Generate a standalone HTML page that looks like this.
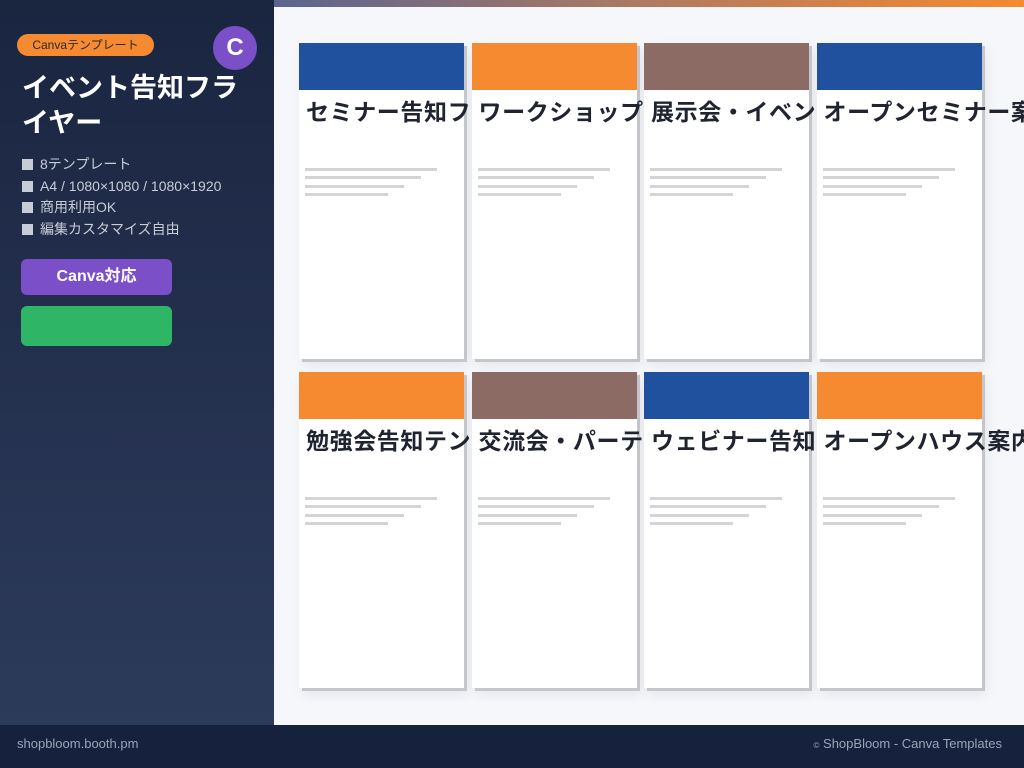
<!DOCTYPE html>
<html><head><meta charset="utf-8"><style>
*{margin:0;padding:0;box-sizing:border-box}
body{width:1024px;height:768px;overflow:hidden;font-family:"Liberation Sans","Noto Sans CJK JP",sans-serif;background:#f5f7fb;position:relative}
.side{position:absolute;left:0;top:0;width:274px;height:725px;background:linear-gradient(180deg,#1a2540,#2d3b5b)}
.top{position:absolute;left:274px;top:0;width:750px;height:7px;background:linear-gradient(90deg,#5a6490,#b07a60 50%,#f58a30)}
.main{position:absolute;left:274px;top:7px;width:750px;height:718px;background:#f5f7fb}
.foot{position:absolute;left:0;top:725px;width:1024px;height:43px;background:#16223d;color:#9aa3b8;font-size:13px}
.badge{position:absolute;left:17px;top:34px;width:137px;height:22px;border-radius:11px;background:#f58a30;color:#2a2a2a;font-size:12px;text-align:center;line-height:22px}
.av{position:absolute;left:213px;top:26px;width:44px;height:44px;border-radius:50%;background:#7a4fc8;color:#fff;font-size:24px;font-weight:bold;text-align:center;line-height:44px}
h1{position:absolute;left:22px;top:71px;color:#fff;font-size:27px;line-height:35px;font-weight:bold;width:230px}
ul{position:absolute;left:22px;top:154px;list-style:none;color:#c8ccd6;font-size:14px;line-height:21.5px}
ul li:before{content:"";display:inline-block;width:11px;height:11px;background:#c8ccd6;margin-right:7px;vertical-align:-1px}
.b1{position:absolute;left:21px;top:259px;width:151px;height:36px;border-radius:6px;background:#7a4fc8;color:#fff;font-size:16px;font-weight:bold;text-align:center;line-height:36px}
.b2{position:absolute;left:21px;top:306px;width:151px;height:40px;border-radius:6px;background:#2fb566}
.card{position:absolute;width:165px;height:316px;background:#fff;box-shadow:3px 3px 0 #c4c6cc,4px 6px 12px rgba(0,0,0,.08)}
.card .h{height:47px}
.card .t{position:absolute;left:7px;top:50px;font-size:23px;letter-spacing:0.6px;font-weight:bold;color:#1f2430;white-space:nowrap}
.card i{position:absolute;left:6px;height:3px;background:#d4d4d6}
</style></head><body>
<div class="side">
<div class="badge">Canvaテンプレート</div>
<div class="av">C</div>
<h1>イベント告知フライヤー</h1>
<ul><li>8テンプレート</li><li>A4 / 1080×1080 / 1080×1920</li><li>商用利用OK</li><li>編集カスタマイズ自由</li></ul>
<div class="b1">Canva対応</div>
<div class="b2"></div>
</div>
<div class="top"></div>
<div class="main"></div>
<div id="cards"></div>
<div class="foot"><span style="position:absolute;left:17px;top:11px">shopbloom.booth.pm</span><span style="position:absolute;right:22px;top:11px"><span style="font-size:8px">©</span> ShopBloom - Canva Templates</span></div>
<script>
var d=[["#20519e","セミナー告知フライヤー"],["#f58a30","ワークショップ告知"],["#8d6b65","展示会・イベント告知"],["#20519e","オープンセミナー案内"],["#f58a30","勉強会告知テンプレート"],["#8d6b65","交流会・パーティー"],["#20519e","ウェビナー告知"],["#f58a30","オープンハウス案内"]];
var h="";
d.forEach(function(c,i){var x=299+(i%4)*172.5,y=i<4?43:372;
h+='<div class="card" style="left:'+x+'px;top:'+y+'px"><div class="h" style="background:'+c[0]+'"></div><div class="t">'+c[1]+'</div><i style="top:125px;width:132px"></i><i style="top:133px;width:116px"></i><i style="top:142px;width:99px"></i><i style="top:150px;width:83px"></i></div>';});
document.getElementById("cards").innerHTML=h;
</script>
</body></html>
